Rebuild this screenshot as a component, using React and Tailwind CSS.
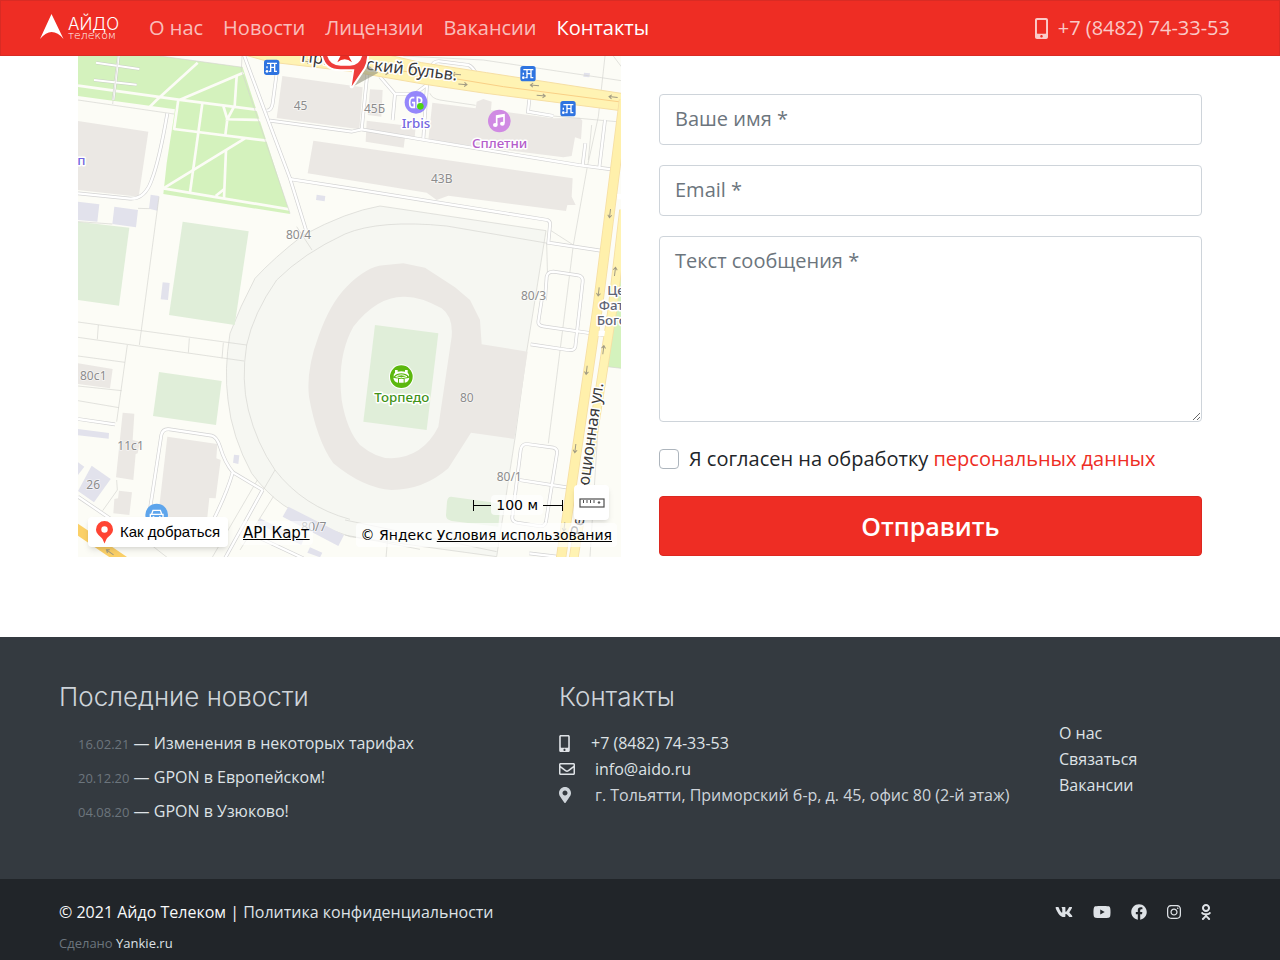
import React from "react";
import {
  FaMobileAlt,
  FaRegEnvelope,
  FaMapMarkerAlt,
  FaVk,
  FaYoutube,
  FaFacebook,
  FaInstagram,
  FaOdnoklassniki,
} from "react-icons/fa";

const navLinks = ["О нас", "Новости", "Лицензии", "Вакансии", "Контакты"];

const news = [
  { date: "16.02.21", title: "Изменения в некоторых тарифах" },
  { date: "20.12.20", title: "GPON в Европейском!" },
  { date: "04.08.20", title: "GPON в Узюково!" },
];

const socials = [
  { name: "ВКонтакте", Icon: FaVk, size: "h-4 w-[18px]" },
  { name: "YouTube", Icon: FaYoutube, size: "h-4 w-[18px]" },
  { name: "Facebook", Icon: FaFacebook, size: "h-4 w-4" },
  { name: "Instagram", Icon: FaInstagram, size: "h-4 w-3.5" },
  { name: "Одноклассники", Icon: FaOdnoklassniki, size: "h-4 w-2.5" },
];

const Logo = () => (
  <svg width="82" height="30" viewBox="0 0 82 30" aria-hidden="true">
    <path
      d="M11.5 1 L23.5 26 Q18 19 11.5 19 Q6 19 0 26 Z"
      fill="#fff"
    />
    <g fill="#fff">
      <text x="28" y="17" fontSize="17" fontWeight="300" fontFamily="Inter, sans-serif">
        АЙДО
      </text>
      <text x="28" y="26" fontSize="11" fontWeight="200" fontFamily="'DejaVu Sans', sans-serif">
        телеком
      </text>
    </g>
  </svg>
);

const Header = () => (
  <header className="sticky top-0 z-20 flex h-14 items-center border border-[#d92b24] bg-[#ee2d24] px-[39px]">
    <a href="#top" aria-label="Айдо Телеком">
      <Logo />
    </a>
    <nav className="ml-[17px] flex text-xl">
      {navLinks.map((link) => (
        <a
          key={link}
          href="#nav"
          className={
            link === "Контакты" ? "px-2.5 text-white" : "px-2.5 text-white/70"
          }
        >
          {link}
        </a>
      ))}
    </nav>
    <a
      href="tel:+78482743353"
      className="ml-auto flex items-center gap-2.5 pr-2.5 text-xl text-white/75"
    >
      <FaMobileAlt className="h-[21px] w-[13px]" />
      +7 (8482) 74-33-53
    </a>
  </header>
);

const Transit = ({ x, y }) => (
  <g transform={`translate(${x} ${y})`}>
    <rect x="-23" y="-23" width="46" height="46" rx="8" fill="#2f74e0" />
    <path
      d="M-14 -12 H16 M-3 -12 V12 H-8 M9 -12 V12 H16 M-3 0 H9 M-14 -3 V3"
      fill="none"
      stroke="#fff"
      strokeWidth="4"
    />
    <circle cx="-14" cy="12" r="4" fill="#fff" />
  </g>
);

const Arrow = ({ x, y, angle }) => (
  <path
    transform={`translate(${x} ${y}) rotate(${angle})`}
    d="M-13 0 H13 M5 -6 L13 0 L5 6"
    fill="none"
    stroke="#a09a83"
    strokeWidth="3"
  />
);

const roads = [
  "M520 10 L583 180 L660 385 L708 540",
  "M24 430 L180 446 Q225 448 245 390 Q268 330 292 190",
  "M620 70 L608 160 Q605 182 590 182",
  "M600 212 L845 245 L875 238 L1065 270 L1525 345 L1625 358",
  "M658 387 L825 413 L1432 510 Q1442 514 1440 525 L1435 578 L1592 602",
  "M875 238 L892 70",
  "M1060 266 L1072 90",
  "M1068 100 L1085 50 Q1090 32 1110 34 L1195 45 Q1208 50 1218 70",
  "M930 80 L975 132 L1035 132 L1070 105 M975 132 L968 210",
  "M1378 148 L1374 185 L1450 198",
  "M1605 210 L1588 352 M1546 280 L1538 345",
  "M1425 750 L1430 680 Q1433 665 1450 665 L1525 676 Q1540 680 1538 695 L1516 890 Q1512 903 1495 900 L1382 883",
  "M1415 750 L1405 815 Q1404 827 1420 829 L1600 855",
  "M1370 1182 L1450 1193 Q1463 1196 1461 1210 L1428 1415 Q1424 1432 1405 1428 L1340 1418 Q1325 1414 1327 1400 L1352 1200 Q1355 1182 1370 1182 Z",
  "M1348 1290 L1490 1312",
  "M1378 1510 L1460 1520",
  "M238 1390 L274 1155 Q278 1135 300 1138 L425 1157 Q440 1160 450 1190 Q465 1240 490 1268 L578 1320",
  "M488 1268 Q470 1330 430 1410 M578 1320 L465 1525",
  "M24 1107 L135 1123",
  "M24 1340 L130 1412",
  "M540 1450 L700 1525",
];

const parkPaths = [
  "M24 107 L325 149 L600 184",
  "M383 38 L260 150 L230 180",
  "M330 149 L520 68",
  "M500 78 L494 168",
  "M325 149 L312 240",
  "M397 160 L360 428",
  "M312 237 L590 272",
  "M460 168 L472 208 L466 255 M492 170 L472 208 L572 210",
  "M525 265 L280 415",
  "M468 300 L462 445 M437 438 L462 418",
  "M280 415 L658 478",
];

const buildings = [
  "24,213 235,245 206,440 24,420",
  "637,78 878,112 868,238 620,204",
  "730,272 1508,385 1505,440 1517,465 1492,465 1488,483 1135,437 1100,450 1070,428 713,370",
  "900,118 938,120 934,200 893,195",
  "890,212 1037,230 1034,262 1005,262 1001,293 887,275",
  "1087,158 1217,175 1220,155 1240,147 1265,155 1263,180 1450,205 1530,203 1537,212 1533,268 1515,262 1505,318 1480,322 1075,270",
  "24,940 128,957 120,1015 24,1002",
  "158,1088 193,1091 188,1170 210,1175 203,1210 197,1212 190,1290 138,1282",
  "147,1322 186,1327 178,1395 130,1390 133,1347 144,1345",
  "292,1160 442,1182 439,1225 452,1230 437,1345 418,1344 410,1420 262,1420",
];

const sheds = [
  "24,455 88,463 82,515 24,510",
  "133,470 204,480 198,532 127,522",
  "242,434 267,438 262,482 237,476",
  "278,697 299,699 294,750 272,748",
  "740,434 766,438 764,454 738,450",
  "24,1137 117,1149 116,1166 24,1156",
  "65,1247 122,1287 72,1357 24,1323",
  "24,1237 43,1250 24,1275",
  "492,1214 508,1216 505,1242 489,1238",
  "655,1370 822,1455 805,1488 638,1400",
  "570,1405 700,1470 694,1485 562,1420",
  "720,1492 757,1508 750,1522 712,1508",
  "1542,68 1560,70 1558,82 1540,80",
];

const fields = [
  "24,515 178,533 147,767 24,750",
  "338,515 536,544 494,825 297,795",
  "267,966 455,993 438,1125 249,1098",
];

const boundaries = [
  "M267 440 L222 780 L208 885",
  "M24 150 L312 192 M145 18 L128 162",
  "M270 18 L518 52",
  "M516 18 L514 60 L660 490 M680 530 L726 600",
  "M204 475 L238 476 M24 515 L127 522",
  "M24 816 L530 885 M24 862 L522 933 M85 825 L82 868 M358 865 L355 908 M460 878 L456 925",
  "M24 918 L165 937 M172 885 L140 1115 M24 1008 L155 1022 M24 1052 L147 1073",
  "M140 1290 L142 1320 L98 1382",
  "M615 1260 L565 1345 M562 1290 L425 1525 M610 1340 L510 1500",
  "M250 1490 L295 1525",
  "M1000 18 L1240 30 L1654 92 M1630 18 L1654 50",
  "M1605 18 L1585 200 L1552 350 L1510 585 L1435 1180",
  "M1080 130 Q1085 145 1110 150 L1217 166 M1450 198 L1640 215 M1565 225 L1555 330",
  "M1440 540 L1510 585 M1430 580 L1433 690",
  "M1585 1120 L1560 1520 M1654 955 L1612 950",
  "M825 1410 L1280 1505 M825 1455 L1050 1498 M955 1440 L948 1525",
];

const numbers = [
  ["45", 671, 180],
  ["45Б", 882, 189],
  ["43В", 1083, 398],
  ["80/4", 648, 567],
  ["80/3", 1353, 750],
  ["80", 1170, 1055],
  ["80/1", 1280, 1293],
  ["80с1", 30, 991],
  ["11с1", 142, 1201],
  ["26", 49, 1316],
  ["80/7", 694, 1442],
];

// three drawing units to one screen pixel
const MapCanvas = () => (
  <svg
    viewBox="24 18 1629 1503"
    preserveAspectRatio="xMidYMid slice"
    className="block h-full w-full"
    fontFamily="'Noto Sans', sans-serif"
    role="img"
    aria-label="Карта"
  >
    <rect x="0" y="0" width="1700" height="1560" fill="#fcfcf6" />

    <path
      d="M24 18 H270 L518 52 L660 492 L280 432 L290 340 L315 178 L24 138 Z"
      fill="#d4f2bd"
    />
    {parkPaths.map((d) => (
      <path key={d} d={d} fill="none" stroke="#fcfcf6" strokeWidth="8" />
    ))}
    <g fill="none" stroke="#c9cfc5" strokeWidth="9">
      <path d="M146 18 L130 150 M78 38 L208 57 M72 90 L200 104" />
    </g>
    <g fill="none" stroke="#fff" strokeWidth="6">
      <path d="M146 18 L130 150 M78 38 L208 57 M72 90 L200 104" />
    </g>

    <path
      d="M1428 542 L930 468 Q830 485 700 555 Q610 625 555 685 Q510 770 480 850 Q462 960 474 1050 Q485 1160 545 1270 Q590 1330 640 1365 Q720 1420 840 1460 L1280 1520 L1335 1165 L1370 905 L1395 750 Z"
      fill="#f6f7f2"
      stroke="#d4d4d0"
      strokeWidth="2"
    />
    <path
      d="M1434 580 L1130 528 Q930 508 825 552 Q700 610 620 690 Q550 790 530 885 Q513 990 535 1080 Q560 1180 615 1260 Q700 1370 840 1408"
      fill="none"
      stroke="#d4d4d0"
      strokeWidth="2"
    />
    {fields.map((p) => (
      <polygon key={p} points={p} fill="#e0eed9" />
    ))}
    <path
      d="M1143 1340 L1275 1358 Q1292 1362 1290 1375 L1285 1430 L1145 1413 Q1127 1408 1128 1395 L1131 1355 Q1133 1340 1143 1340 Z"
      fill="#e0eed9"
    />
    <path d="M1640 650 H1654 V955 L1610 950 Z" fill="#d4f2bd" />

    <path
      fillRule="evenodd"
      fill="#ebe8e4"
      d="M1000 640 L1065 653 L1155 712 L1200 750 L1230 810 L1235 883 L1373 905 L1333 1167 L1203 1148 L1135 1255 Q1060 1320 965 1320 Q880 1315 790 1240 Q740 1170 717 1040 Q708 960 745 860 Q780 760 830 710 Q890 650 940 646 Z M1000 740 Q920 740 850 830 Q800 920 815 1050 Q830 1140 870 1185 Q920 1226 965 1225 Q1060 1220 1105 1130 L1145 860 Q1150 800 1115 775 Q1050 738 1000 740 Z"
    />
    <polygon points="915,825 1105,850 1070,1140 880,1115" fill="#e0eed9" />

    {buildings.map((p) => (
      <polygon key={p} points={p} fill="#ebe8e4" />
    ))}
    {sheds.map((p) => (
      <polygon key={p} points={p} fill="#e2e2ec" />
    ))}
    {boundaries.map((d) => (
      <path key={d} d={d} fill="none" stroke="#d4d4d0" strokeWidth="2" />
    ))}
    {roads.map((d) => (
      <path key={d} d={d} fill="none" stroke="#d3d3d3" strokeWidth="11" />
    ))}
    {roads.map((d) => (
      <path key={d} d={d} fill="none" stroke="#fff" strokeWidth="7" />
    ))}

    <path
      d="M528 16 L960 16 L1055 38 L1250 68 L1660 131 V183 L1240 129 L1065 103 L840 64 L600 36 Z"
      fill="#fff3b3"
      stroke="#f6dfa4"
      strokeWidth="3"
    />
    <path
      d="M870 48 L1070 72 L1300 110 L1660 157"
      fill="none"
      stroke="#f9cf86"
      strokeWidth="3"
    />
    <g fill="none">
      <path
        d="M1662 480 L1627 780 L1511 1525"
        stroke="#f6dfa4"
        strokeWidth="29"
      />
      <path
        d="M1662 150 L1582 780 L1473 1525"
        stroke="#f6dfa4"
        strokeWidth="31"
      />
      <path d="M1642 440 H1660 M1585 850 H1605" stroke="#fff" strokeWidth="16" />
      <path
        d="M1662 480 L1627 780 L1511 1525"
        stroke="#fff3b3"
        strokeWidth="24"
      />
      <path
        d="M1662 150 L1582 780 L1473 1525"
        stroke="#fff0ab"
        strokeWidth="26"
      />
      <path d="M10 1430 L165 1535" stroke="#fbd067" strokeWidth="30" />
    </g>
    <Arrow x={708} y={34} angle={5} />
    <Arrow x={942} y={68} angle={5} />
    <Arrow x={1160} y={73} angle={185} />
    <Arrow x={1178} y={103} angle={5} />
    <Arrow x={1394} y={106} angle={185} />
    <Arrow x={1413} y={137} angle={5} />
    <Arrow x={1630} y={141} angle={185} />
    <Arrow x={1620} y={490} angle={97} />
    <Arrow x={1635} y={665} angle={-83} />
    <Arrow x={1586} y={725} angle={97} />
    <Arrow x={1600} y={900} angle={-83} />
    <Arrow x={1550} y={960} angle={97} />
    <Arrow x={1516} y={1195} angle={97} />
    <Arrow x={1483} y={1430} angle={97} />
    <Arrow x={120} y={1507} angle={215} />

    <g fill="#8c8c8c" fontSize="36">
      {numbers.map(([label, x, y]) => (
        <text
          key={label}
          x={x}
          y={y}
          stroke="#fff"
          strokeOpacity="0.6"
          strokeWidth="5"
          paintOrder="stroke"
        >
          {label}
        </text>
      ))}
    </g>

    <g stroke="#fff" strokeWidth="9" strokeLinejoin="round" paintOrder="stroke">
      <text
        transform="translate(1160 92) rotate(7)"
        textAnchor="end"
        fontSize="50"
        fill="#3a3a3a"
      >
        Приморский бульв.
      </text>
      <text
        transform="translate(1600 1000) rotate(-82)"
        textAnchor="end"
        fontSize="49"
        fill="#3a3a3a"
      >
        Революционная ул.
      </text>
      <g fill="#5f6475" fontSize="40" fontWeight="500">
        <text x="1612" y="735">
          Це
        </text>
        <text x="1586" y="780">
          Фат
        </text>
        <text x="1580" y="825">
          Бого
        </text>
      </g>
      <text x="1038" y="235" textAnchor="middle" fontSize="40" fontWeight="500" fill="#7366e0">
        Irbis
      </text>
      <text x="1289" y="293" textAnchor="middle" fontSize="40" fontWeight="500" fill="#b45ecb">
        Сплетни
      </text>
      <text x="995" y="1055" textAnchor="middle" fontSize="40" fontWeight="500" fill="#419318">
        Торпедо
      </text>
      <text x="22" y="346" fontSize="40" fontWeight="500" fill="#7366e0">
        п
      </text>
    </g>

    <Transit x={605} y={52} />
    <Transit x={1374} y={71} />
    <Transit x={1494} y={176} />

    <g transform="translate(1038 157)">
      <circle r="34" fill="#9587fb" />
      <path
        d="M-5 -14 H-13 Q-19 -12 -19 0 Q-19 14 -13 15 H-5 V1 H-12 M4 18 V-15 H9 Q18 -14 17 -4 Q16 3 5 3"
        fill="none"
        stroke="#fff"
        strokeWidth="5"
      />
      <circle cx="13" cy="12" r="10" fill="#4cd40f" />
    </g>
    <g transform="translate(1288 213)">
      <circle r="34" fill="#d08ae3" />
      <path
        d="M-8 11 V-15 L14 -19 V7 M-8 -11 L14 -15"
        fill="none"
        stroke="#fff"
        strokeWidth="5"
      />
      <ellipse cx="-12" cy="12" rx="7" ry="6" fill="#fff" />
      <ellipse cx="9" cy="8" rx="7" ry="6" fill="#fff" />
    </g>
    <g transform="translate(994 980)">
      <circle r="37" fill="#fff" />
      <circle r="34" fill="#5cb80e" />
      <path
        d="M-19 -20 h8 v5 Q0 -18 11 -15 v-5 h8 v8 Q24 -9 23 0 Q14 -10 0 -10 Q-14 -10 -23 0 Q-24 -9 -19 -12 Z"
        fill="#fff"
      />
      <path
        d="M-24 3 Q-14 6 -10 5 V18 Q-22 16 -24 3 Z M24 3 Q14 6 10 5 V18 Q22 16 24 3 Z M-7 7 H7 V18 H-7 Z"
        fill="#fff"
      />
      <path
        d="M-17 0 Q0 -11 17 0 Q0 7 -17 0 Z"
        fill="none"
        stroke="#fff"
        strokeWidth="3"
      />
    </g>
    <g transform="translate(260 1395)">
      <circle r="34" fill="#5ea5ec" />
      <path
        d="M-19 -2 H19 V14 H-19 Z M-15 -3 L-11 -14 H11 L15 -3"
        fill="none"
        stroke="#fff"
        strokeWidth="4"
      />
      <path d="M-12 6 h5 M7 6 h5" stroke="#fff" strokeWidth="4" />
    </g>

    <path d="M848 110 L893 45 L925 68 Z" fill="#8f8f7a" opacity="0.6" />
    <path
      d="M757 -10 Q754 58 812 58 H853 L845 109 L882 54 Q894 32 892 -10 Z"
      fill="#ee3d3b"
      stroke="#fff"
      strokeWidth="12"
      strokeLinejoin="round"
      paintOrder="stroke"
    />
    <path d="M769 -10 Q767 47 812 47 H840 Q880 46 880 -10 Z" fill="#fff" />
    <path d="M802 37 L819 2 L828 2 L846 37 Q824 18 802 37 Z" fill="#ee2d24" />
  </svg>
);

const YandexMap = () => (
  <section className="relative h-[501px] overflow-hidden">
    <MapCanvas />
    <button
      type="button"
      className="absolute bottom-2.5 left-2.5 flex h-[30px] items-center gap-[7px] rounded bg-white px-2 font-['Liberation_Sans',sans-serif] text-[15px] text-black shadow-md"
    >
      <svg width="17" height="23" viewBox="0 0 17 23">
        <path
          d="M8.500 0 A8.500 8.500 0 0 1 17 8.500 C17 13 13 14.500 10.500 18 L8.500 22.500 L6.500 18 C4 14.500 0 13 0 8.500 A8.500 8.500 0 0 1 8.500 0 Z"
          fill="#f43"
        />
        <circle cx="8.500" cy="8.500" r="3.200" fill="#fff" />
      </svg>
      Как добраться
    </button>
    <a
      href="#api"
      className="absolute bottom-3 left-[162px] rounded bg-white/60 px-[3px] font-['DejaVu_Sans',sans-serif] text-[15px] leading-6 text-black underline"
    >
      API Карт
    </a>
    <button
      type="button"
      aria-label="Линейка"
      className="absolute right-3 bottom-[37px] flex h-[35px] w-[35px] items-center justify-center rounded bg-white shadow-md"
    >
      <svg width="26" height="10" viewBox="0 0 26 10" fill="none" stroke="#4d4d4d">
        <rect x="1" y="1" width="24" height="8" strokeWidth="1.200" />
        <path d="M4.500 2 V5 M8 2 V5 M11.500 2 V5 M15 2 V5" />
        <circle cx="20" cy="4.500" r="0.800" fill="#4d4d4d" />
      </svg>
    </button>
    <div className="absolute right-[58px] bottom-[42px] flex items-center font-['DejaVu_Sans',sans-serif] text-sm leading-5 text-black">
      <span className="h-[11px] w-px bg-black" />
      <span className="h-px w-[17px] bg-black" />
      <span className="rounded bg-white/70 px-[5px]">100 м</span>
      <span className="h-px w-[19px] bg-black" />
      <span className="h-[11px] w-px bg-black" />
    </div>
    <p className="absolute right-1 bottom-2.5 rounded bg-white/70 px-[5px] font-['DejaVu_Sans',sans-serif] text-sm leading-6 whitespace-nowrap text-black">
      © Яндекс{" "}
      <a href="#terms" className="underline">
        Условия использования
      </a>
    </p>
  </section>
);

const ContactForm = () => (
  <form className="flex flex-col gap-5 pt-[38px] text-xl" onSubmit={(e) => e.preventDefault()}>
    <input
      type="text"
      aria-label="Ваше имя"
      placeholder="Ваше имя *"
      className="h-[51px] w-full rounded border border-[#ced4da] px-[15px] pb-0.5 placeholder:text-[#6c757d]"
    />
    <input
      type="email"
      aria-label="Email"
      placeholder="Email *"
      className="h-[51px] w-full rounded border border-[#ced4da] px-[15px] pb-0.5 placeholder:text-[#6c757d]"
    />
    <textarea
      aria-label="Текст сообщения"
      placeholder="Текст сообщения *"
      className="h-[186px] w-full rounded border border-[#ced4da] px-[15px] py-[9px] leading-[30px] placeholder:text-[#6c757d]"
    />
    <div className="mt-0.5 flex items-center gap-2.5 leading-[30px]">
      <input
        id="agree"
        type="checkbox"
        className="h-5 w-5 appearance-none rounded border border-[#adb5bd] bg-white"
      />
      <label htmlFor="agree" className="text-[#212529]">
        Я согласен на обработку{" "}
        <a href="#personal" className="text-[#ee2d24]">
          персональных данных
        </a>
      </label>
    </div>
    <button
      type="submit"
      className="mt-0.5 h-[60px] rounded border border-[#dc2820] bg-[#ee2d24] text-[25px] font-semibold text-white"
    >
      Отправить
    </button>
  </form>
);

const Footer = () => (
  <footer className="text-base text-[#dee2e6]">
    <div className="grid grid-cols-12 bg-[#343a40] px-10 pt-10 pb-[51px]">
      <div className="col-span-5 px-[19px]">
        <h2 className="font-[Inter,'Noto_Sans',sans-serif] text-[26px] leading-10 font-light text-[#ced4da]">
          Последние новости
        </h2>
        <ul className="mt-[9px] px-[19px]">
          {news.map((item) => (
            <li key={item.date} className="py-1 leading-[26px]">
              <span className="text-[13px] leading-none text-[#6c757d]">
                {item.date}
              </span>{" "}
              — <a href="#news">{item.title}</a>
            </li>
          ))}
        </ul>
      </div>
      <div className="col-span-5 px-[19px]">
        <h2 className="font-[Inter,'Noto_Sans',sans-serif] text-[26px] leading-10 font-light text-[#ced4da]">
          Контакты
        </h2>
        <ul className="mt-[13px] leading-[26px]">
          <li className="flex items-center">
            <FaMobileAlt className="h-[17px] w-[11px]" />
            <a href="tel:+78482743353" className="ml-[21px]">
              +7 (8482) 74-33-53
            </a>
          </li>
          <li className="flex items-center">
            <FaRegEnvelope />
            <a href="mailto:info@aido.ru" className="ml-5">
              info@aido.ru
            </a>
          </li>
          <li className="flex items-center text-[#ced4da]">
            <FaMapMarkerAlt className="h-4 w-3" />
            <span className="ml-6">
              г. Тольятти, Приморский б-р, д. 45, офис 80 (2-й этаж)
            </span>
          </li>
        </ul>
      </div>
      <ul className="col-span-2 px-[19px] pt-[43px] leading-[26px]">
        <li>
          <a href="#about">О нас</a>
        </li>
        <li>
          <a href="#contact">Связаться</a>
        </li>
        <li>
          <a href="#jobs">Вакансии</a>
        </li>
      </ul>
    </div>
    <div className="flex items-start justify-between bg-[#212529] px-[59px] pt-5 pb-2">
      <div>
        <p className="leading-[26px] text-[#f8f9fa]">
          © 2021 Айдо Телеком |{" "}
          <a href="#privacy" className="text-[#dee2e6]">
            Политика конфиденциальности
          </a>
        </p>
        <p className="mt-2 text-[13px] leading-5 text-[#6c757d]">
          Сделано{" "}
          <a href="#yankie" className="text-[#dee2e6]">
            Yankie.ru
          </a>
        </p>
      </div>
      <div className="flex items-center gap-5 pt-[5px] pr-2.5">
        {socials.map(({ name, Icon, size }) => (
          <a key={name} href="#social" aria-label={name}>
            <Icon className={size} />
          </a>
        ))}
      </div>
    </div>
  </footer>
);

const App = () => (
  <div
    id="top"
    className="min-h-screen bg-[#212529] font-['Open_Sans','Noto_Sans',sans-serif]"
  >
    <Header />
    <main className="grid grid-cols-2 gap-[38px] bg-white px-[78px] pb-20">
      <YandexMap />
      <ContactForm />
    </main>
    <Footer />
  </div>
);

export default App;
